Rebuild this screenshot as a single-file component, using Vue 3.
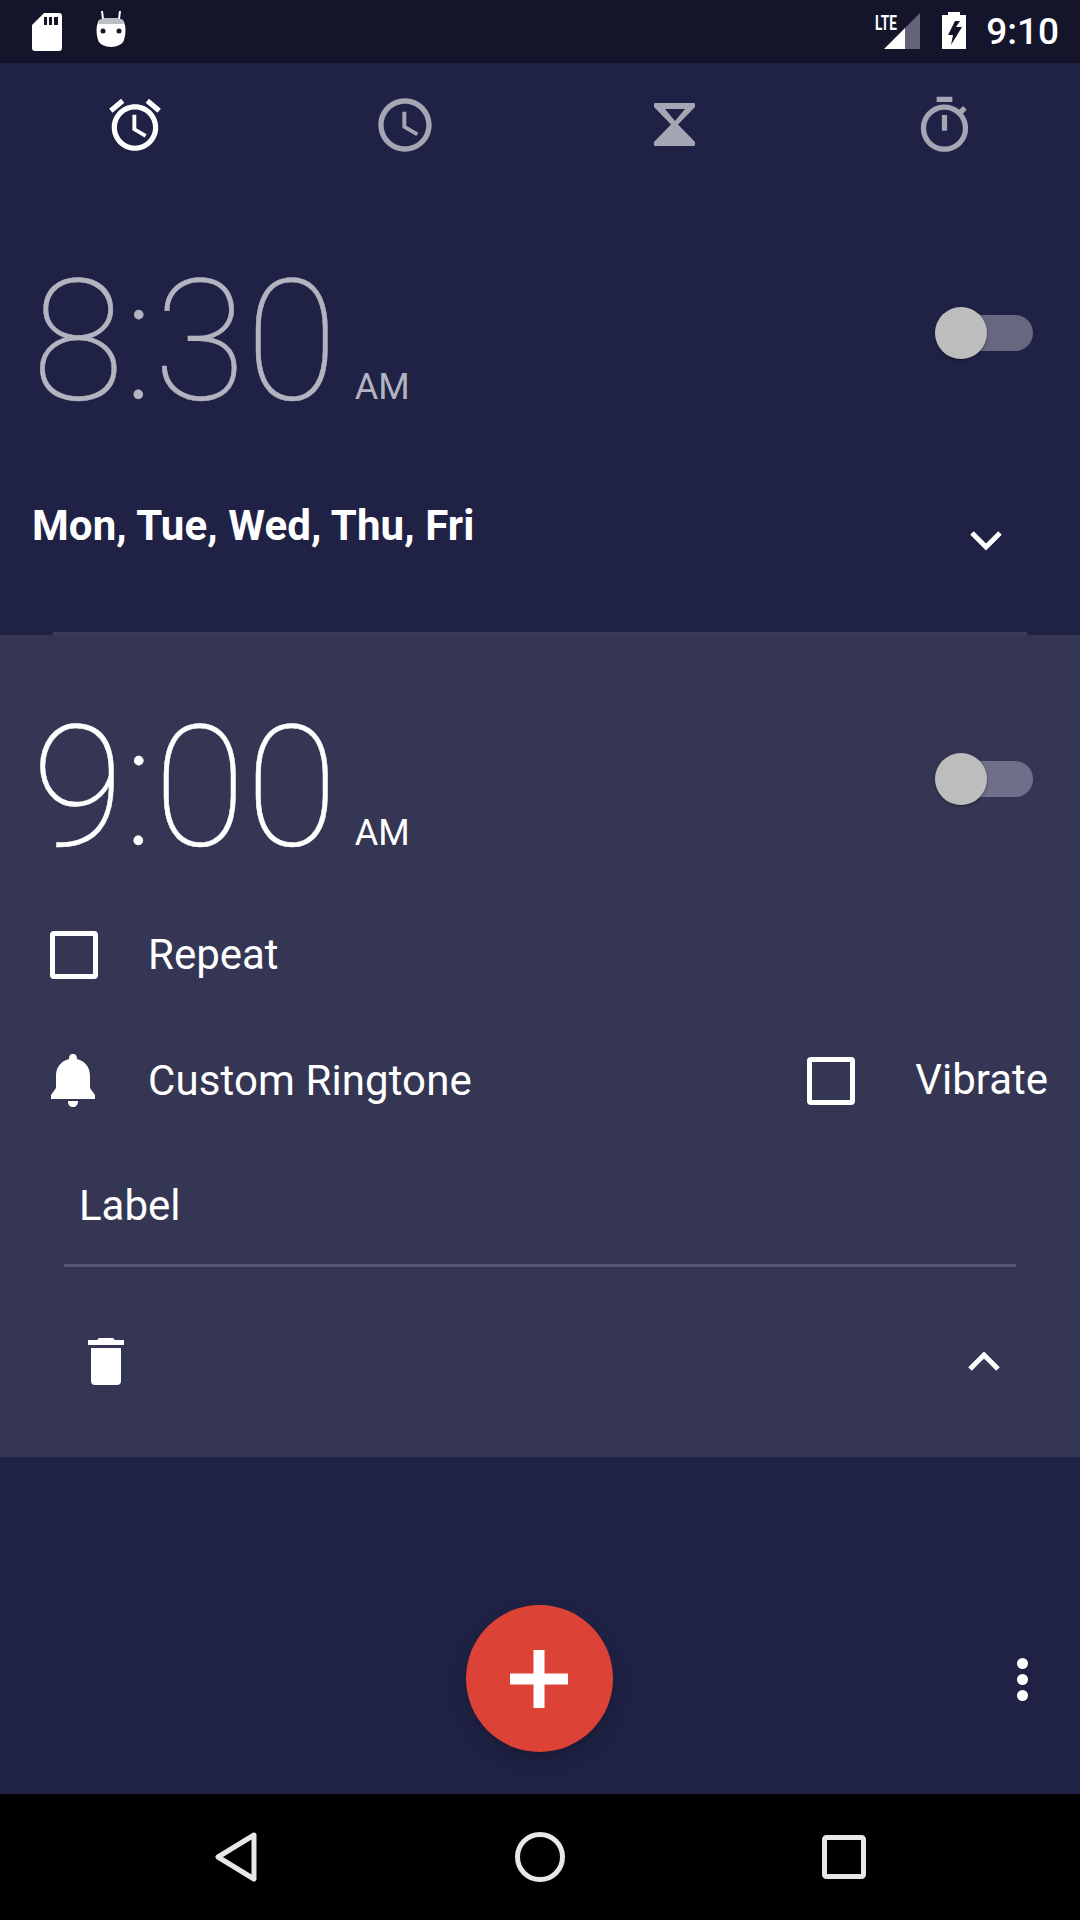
<template>
  <div class="screen">
    <!-- status bar -->
    <div class="status-bar">
      <div class="status-left">
        <svg class="ic-sd" viewBox="0 0 30 38" width="30" height="38">
          <path fill-rule="evenodd" fill="#fff" d="M12 0H27Q30 0 30 3V35Q30 38 27 38H3Q0 38 0 35V12ZM12 4V12H15V4ZM17 4V12H20V4ZM22 4V12H26V4Z" />
        </svg>
        <svg class="ic-droid" viewBox="0 0 32 36" width="32" height="36">
          <path d="M8 8 7 0M24 8l1-8" stroke="#fff" stroke-width="2" fill="none" />
          <path fill="#fff" d="M16 7C24 7 28 8 29 11 31 16 31 22 29 29 28 33 22 36 16 36S4 33 3 29C1 22 1 16 3 11 4 8 8 7 16 7Z" />
          <path fill="#bdbdc4" d="M16 7C24 7 28 8 29 11L28 13H4L3 11C4 8 8 7 16 7Z" />
          <circle cx="8" cy="20" r="2.5" fill="#14152a" />
          <circle cx="24" cy="20" r="2.5" fill="#14152a" />
        </svg>
      </div>
      <div class="status-right">
        <div class="signal">
          <span class="lte">LTE</span>
          <svg viewBox="0 0 36 36" width="36" height="36">
            <path fill="#fff" d="M0 36 21 15V36Z" />
            <path fill="#63647a" d="M21 15 36 0V36H21Z" />
          </svg>
        </div>
        <svg class="ic-battery" viewBox="0 0 24 37" width="24" height="37">
          <path fill-rule="evenodd" fill="#fff" d="M6 0H18V3H24V37H0V3H6ZM13 9 6 23H11L9 33 20 15H14L18 9Z" />
        </svg>
        <span class="clock">9:10</span>
      </div>
    </div>

    <!-- tabs -->
    <div class="tabs">
      <div v-for="(tab, i) in tabs" :key="tab.name" class="tab" :class="{ active: i === 0 }">
        <svg :viewBox="tab.box" :width="tab.w" :height="tab.h">
          <path fill="currentColor" fill-rule="evenodd" :d="tab.d" />
        </svg>
      </div>
    </div>

    <!-- first alarm, collapsed -->
    <section class="alarm">
      <div class="time-row dim">
        <div class="time">8<span class="colon">:</span>30<span class="ampm">AM</span></div>
        <div class="toggle"><span class="track"></span><span class="thumb"></span></div>
      </div>
      <div class="days-row">
        <span class="days">Mon, Tue, Wed, Thu, Fri</span>
        <svg class="chevron" viewBox="0 0 32 20" width="32" height="20">
          <path d="M2 2 16 16 30 2" fill="none" stroke="#fff" stroke-width="5" />
        </svg>
      </div>
      <div class="divider"></div>
    </section>

    <!-- second alarm, expanded -->
    <section class="alarm-open">
      <div class="time-row">
        <div class="time">9<span class="colon">:</span>00<span class="ampm">AM</span></div>
        <div class="toggle on-panel"><span class="track"></span><span class="thumb"></span></div>
      </div>

      <div class="opt-row repeat-row">
        <span class="checkbox"></span>
        <span class="opt-text">Repeat</span>
      </div>

      <div class="opt-row ring-row">
        <svg class="bell" viewBox="0 0 44 54" width="44" height="54">
          <path fill="#fff" d="M22 0C25 0 26 2 26 5 34 7 39 13 39 22V34L44 41V45H0V41L5 34V22C5 13 10 7 18 5 18 2 19 0 22 0ZM17 47H27C27 51 25 53 22 53S17 51 17 47Z" />
        </svg>
        <span class="opt-text ring-text">Custom Ringtone</span>
        <span class="checkbox vibrate-box"></span>
        <span class="opt-text vibrate-text">Vibrate</span>
      </div>

      <div class="label-field">Label</div>

      <div class="actions">
        <svg viewBox="0 0 36 47" width="36" height="47">
          <path fill="#fff" d="M11 0H25L27 2H36V7H0V2H9ZM3 10H33V43Q33 47 29 47H7Q3 47 3 43Z" />
        </svg>
        <svg class="chevron" viewBox="0 0 32 20" width="32" height="20">
          <path d="M2 18 16 4 30 18" fill="none" stroke="#fff" stroke-width="5" />
        </svg>
      </div>
    </section>

    <!-- bottom with add button -->
    <div class="footer">
      <button class="fab">
        <svg viewBox="0 0 58 58" width="58" height="58">
          <path fill="#fff" d="M23.5 0H34.5V23.5H58V34.5H34.5V58H23.5V34.5H0V23.5H23.5Z" />
        </svg>
      </button>
      <div class="more"><i></i><i></i><i></i></div>
    </div>

    <!-- nav bar -->
    <div class="nav-bar">
      <svg viewBox="0 0 42 50" width="42" height="50">
        <path d="M39 3 3 25 39 47Z" fill="none" stroke="#e8e8e8" stroke-width="5" stroke-linejoin="round" />
      </svg>
      <svg viewBox="0 0 50 50" width="50" height="50">
        <circle cx="25" cy="25" r="22.5" fill="none" stroke="#e8e8e8" stroke-width="5" />
      </svg>
      <svg viewBox="0 0 44 44" width="44" height="44">
        <rect x="2.5" y="2.5" width="39" height="39" rx="2" fill="none" stroke="#e8e8e8" stroke-width="5" />
      </svg>
    </div>
  </div>
</template>

<script setup>
const tabs = [
  {
    name: 'alarm',
    box: '0 0 24 24',
    w: 62,
    h: 62,
    d: 'M22 5.72l-4.6-3.86-1.29 1.53 4.6 3.86L22 5.72zM7.88 3.39L6.6 1.86 2 5.71l1.29 1.53 4.59-3.85zM12.5 8H11v6l4.75 2.85.75-1.23-4-2.37V8zM12 4c-4.97 0-9 4.03-9 9s4.03 9 9 9 9-4.03 9-9-4.03-9-9-9zm0 16c-3.87 0-7-3.13-7-7s3.13-7 7-7 7 3.13 7 7-3.13 7-7 7z'
  },
  {
    name: 'clock',
    box: '0 0 24 24',
    w: 64,
    h: 64,
    d: 'M11.99 2C6.47 2 2 6.48 2 12s4.47 10 9.99 10C17.52 22 22 17.52 22 12S17.52 2 11.99 2zM12 20c-4.42 0-8-3.58-8-8s3.58-8 8-8 8 3.58 8 8-3.58 8-8 8zm.5-13H11v6l5.25 3.15.75-1.23-4.5-2.67z'
  },
  {
    name: 'timer',
    box: '0 0 42 44',
    w: 42,
    h: 44,
    d: 'M1 0H40Q41 0 41 1V4L24 21.5 41 39V42Q41 43 40 43H1Q0 43 0 42V39L17 21.5 0 4V1Q0 0 1 0ZM11 6 21 18 31 6Z'
  },
  {
    name: 'stopwatch',
    box: '0 0 24 24',
    w: 63,
    h: 63,
    d: 'M15 1H9v2h6V1zm-4 13h2V8h-2v6zm8.03-6.61l1.42-1.42c-.43-.51-.9-.99-1.41-1.41l-1.42 1.42C16.07 4.74 14.12 4 12 4c-4.97 0-9 4.03-9 9s4.02 9 9 9 9-4.03 9-9c0-2.12-.74-4.07-1.97-5.61zM12 20c-3.87 0-7-3.13-7-7s3.13-7 7-7 7 3.13 7 7-3.13 7-7 7z'
  }
];
</script>

<style>
html, body {
  margin: 0;
  background: #1f2244;
}
</style>

<style scoped>
.screen {
  width: 1080px;
  height: 1920px;
  display: flex;
  flex-direction: column;
  background: #1f2244;
  color: #fff;
  font-family: Roboto, "Liberation Sans", sans-serif;
  overflow: hidden;
}

/* status bar */
.status-bar {
  height: 63px;
  flex: none;
  background: #14152a;
  display: flex;
  justify-content: space-between;
  padding: 0 21px 0 32px;
  box-sizing: border-box;
}
.status-left {
  display: flex;
  gap: 33px;
  align-items: flex-start;
}
.ic-sd {
  margin-top: 13px;
}
.ic-droid {
  margin-top: 11px;
}
.status-right {
  display: flex;
  align-items: flex-start;
}
.signal {
  position: relative;
  width: 36px;
  height: 36px;
  margin-top: 13px;
}
.signal svg {
  display: block;
}
.lte {
  position: absolute;
  left: -9px;
  top: 0;
  font-size: 20px;
  line-height: 20px;
  font-weight: 700;
  transform: scaleX(.68);
  transform-origin: left top;
}
.ic-battery {
  margin: 12px 0 0 22px;
}
.clock {
  margin-left: 20px;
  font-size: 37px;
  line-height: 63px;
  font-weight: 500;
}

/* tabs */
.tabs {
  height: 124px;
  flex: none;
  display: grid;
  grid-template-columns: repeat(4, 1fr);
}
.tab {
  display: flex;
  align-items: center;
  justify-content: center;
  color: #a5a6b4;
}
.tab.active {
  color: #fff;
}
.tab:last-child {
  padding-right: 2px;
}

/* alarms */
.alarm {
  height: 448px;
  flex: none;
  box-sizing: border-box;
  padding-top: 72px;
  display: flex;
  flex-direction: column;
}
.alarm-open {
  height: 822px;
  flex: none;
  box-sizing: border-box;
  padding-top: 70px;
  background: #353653;
  position: relative;
}
.time-row {
  display: flex;
  justify-content: space-between;
  padding: 0 47px 0 32px;
  height: 168px;
}
.time {
  margin-top: -1px;
  font-size: 168px;
  line-height: 168px;
  font-weight: 100;
  color: #fff;
  -webkit-text-stroke: .5px currentColor;
  white-space: nowrap;
}
.time-row.dim .time {
  color: #b3b4c0;
}
.colon {
  font-weight: 100;
}
.ampm {
  font-size: 36px;
  font-weight: 400;
  margin-left: 17px;
  -webkit-text-stroke: 0;
}
.toggle {
  position: relative;
  width: 98px;
  height: 52px;
  margin-top: 48px;
}
.track {
  position: absolute;
  left: 0;
  right: 0;
  top: 8px;
  height: 36px;
  border-radius: 18px;
  background: #666880;
}
.on-panel .track {
  background: #6e6f89;
}
.thumb {
  position: absolute;
  left: 0;
  top: 0;
  width: 52px;
  height: 52px;
  border-radius: 50%;
  background: #bdbdbd;
  box-shadow: 0 1px 3px rgba(0, 0, 0, .4);
}

.days-row {
  margin-top: 71px;
  height: 56px;
  padding: 0 78px 0 32px;
  display: flex;
  justify-content: space-between;
  align-items: center;
}
.days {
  font-size: 42px;
  line-height: 56px;
  font-weight: 700;
  letter-spacing: .1px;
  white-space: nowrap;
}
.chevron {
  display: block;
}
.days-row .chevron {
  margin-top: 30px;
}
.divider {
  margin: auto 53px 0;
  height: 3px;
  background: #3b3c5a;
}

/* option rows */
.opt-row {
  display: flex;
  align-items: center;
  padding-left: 50px;
}
.repeat-row {
  margin-top: 58px;
  height: 48px;
}
.ring-row {
  margin-top: 75px;
  height: 54px;
}
.bell {
  margin-left: 1px;
}
.checkbox {
  flex: none;
  width: 48px;
  height: 48px;
  box-sizing: border-box;
  border: 5px solid #fff;
  border-radius: 4px;
}
.opt-text {
  margin-left: 50px;
  font-size: 42px;
  line-height: 48px;
  white-space: nowrap;
}
.ring-text {
  margin-left: 53px;
  flex: 1;
  letter-spacing: .1px;
}
.vibrate-box {
  margin-right: 10px;
}
.vibrate-text {
  margin: -3px 0 0 50px;
  padding-right: 32px;
}
.label-field {
  margin: 74px 64px 0 64px;
  padding: 0 0 34px 15px;
  font-size: 42px;
  line-height: 48px;
  border-bottom: 3px solid #55566f;
}
.actions {
  margin-top: 71px;
  padding: 0 80px 0 88px;
  display: flex;
  justify-content: space-between;
  align-items: center;
}
.actions .chevron {
  margin-top: -2px;
}

/* footer */
.footer {
  flex: 1;
  position: relative;
  display: flex;
  align-items: flex-start;
  justify-content: center;
  box-shadow: inset 0 1px 0 #24264a;
}
.fab {
  margin: 148px 2px 0 0;
  width: 147px;
  height: 147px;
  padding: 0;
  border: 0;
  border-radius: 50%;
  background: #dd4237;
  box-shadow: 0 8px 16px rgba(0, 0, 0, .2);
  display: flex;
  align-items: center;
  justify-content: center;
}
.more {
  position: absolute;
  right: 52px;
  top: 201px;
  display: flex;
  flex-direction: column;
  gap: 5px;
}
.more i {
  display: block;
  width: 11px;
  height: 11px;
  border-radius: 50%;
  background: #fff;
}

/* nav bar */
.nav-bar {
  height: 126px;
  flex: none;
  background: #000;
  display: flex;
  align-items: center;
  justify-content: space-between;
  padding: 0 214px 0 215px;
}
</style>
